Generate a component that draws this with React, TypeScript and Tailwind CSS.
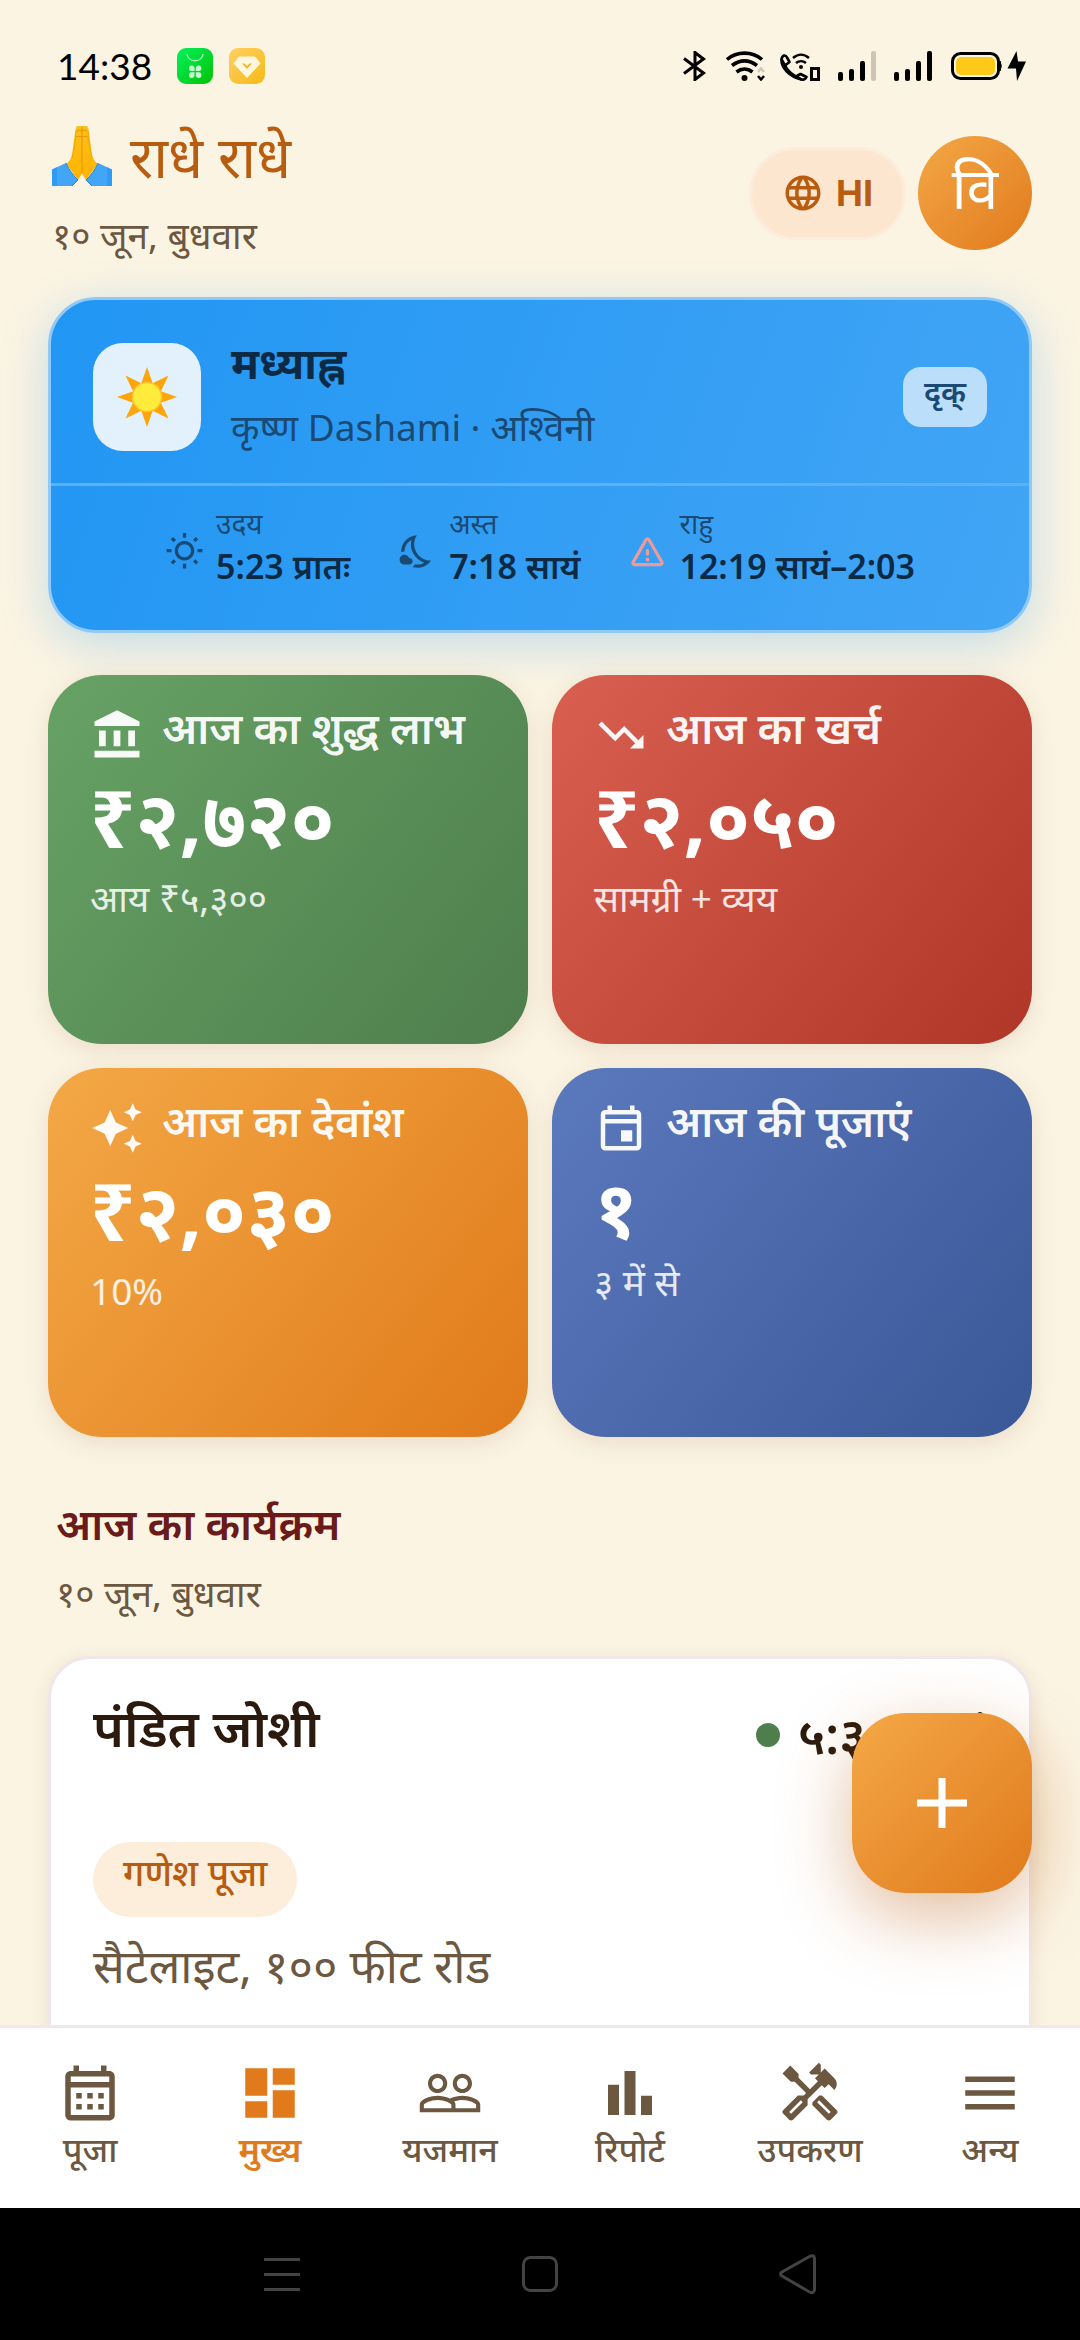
import type { ReactNode } from "react";
import {
  MdBarChart,
  MdDashboard,
  MdLanguage,
  MdMenu,
  MdOutlineCalendarMonth,
  MdOutlineHandyman,
  MdOutlineNightsStay,
  MdOutlineWbSunny,
  MdPeopleOutline,
} from "react-icons/md";

const stats = [
  {
    title: "आज का शुद्ध लाभ",
    value: "₹२,७२०",
    note: "आय ₹५,३००",
    bg: "from-[#67a265] to-[#4e7e4c]",
    leading: "leading-[96px]",
    icon: "M4 10h3v7H4zM10.5 10h3v7h-3zM2 19h20v3H2zM17 10h3v7h-3zM12 1 2 6v2h20V6z",
  },
  {
    title: "आज का खर्च",
    value: "₹२,०५०",
    note: "सामग्री + व्यय",
    bg: "from-[#d95f50] to-[#b03728]",
    leading: "leading-[96px]",
    icon: "m16 18 2.29-2.29-4.88-4.88-4 4L2 7.41 3.41 6l6 6 4-4 6.3 6.29L22 12v6z",
  },
  {
    title: "आज का देवांश",
    value: "₹२,०३०",
    note: "10%",
    bg: "from-[#f4a846] to-[#e07a1a]",
    leading: "leading-[96px]",
    icon: "m19 9 1.25-2.75L23 5l-2.75-1.25L19 1l-1.25 2.75L15 5l2.75 1.25zM11.5 9.5 9 4 6.5 9.5 1 12l5.5 2.5L9 20l2.5-5.5L17 12zM19 15l-1.25 2.75L15 19l2.75 1.25L19 23l1.25-2.75L23 19l-2.75-1.25z",
  },
  {
    title: "आज की पूजाएं",
    value: "१",
    note: "३ में से",
    bg: "from-[#5b79bd] to-[#3a5797]",
    leading: "leading-[87px]",
    icon: "M19 4h-1V2h-2v2H8V2H6v2H5c-1.11 0-1.99.9-1.99 2L3 20a2 2 0 0 0 2 2h14c1.1 0 2-.9 2-2V6c0-1.1-.9-2-2-2zm0 16H5V10h14v10zm0-12H5V6h14v2zm-7 5h5v5h-5z",
  },
];

const tabs = [
  { label: "पूजा", Icon: MdOutlineCalendarMonth, active: false },
  { label: "मुख्य", Icon: MdDashboard, active: true },
  { label: "यजमान", Icon: MdPeopleOutline, active: false },
  { label: "रिपोर्ट", Icon: MdBarChart, active: false },
  { label: "उपकरण", Icon: MdOutlineHandyman, active: false },
  { label: "अन्य", Icon: MdMenu, active: false },
];

function StatusBar() {
  return (
    <div className="flex h-[120px] shrink-0 items-center justify-between pt-3 pr-[54px] pl-[57px]">
      <div className="flex items-center">
        <span className="w-[120px] font-['Lato',sans-serif] text-[37px] leading-[42px] text-black">
          14:38
        </span>
        <svg className="h-9 w-9" viewBox="0 0 36 36">
          <defs>
            <linearGradient id="gift" x1="0" y1="0" x2="1" y2="1">
              <stop offset="0" stopColor="#00f25c" />
              <stop offset="1" stopColor="#05c205" />
            </linearGradient>
          </defs>
          <rect width="36" height="36" rx="9" fill="url(#gift)" />
          <path d="M10 6c1 9 15 9 16 0" fill="none" stroke="#b9fbc4" strokeWidth="1.4" />
          <g fill="#c4fbcf">
            <path d="M17.500 23h-3a2.800 2.800 0 1 1 3-3zM18.800 23h3a2.800 2.800 0 1 0-3-3z" />
            <path d="M17.500 24.300h-3a2.800 2.800 0 1 0 3 3zM18.800 24.300h3a2.800 2.800 0 1 1-3 3z" />
          </g>
        </svg>
        <svg className="ml-4 h-9 w-9" viewBox="0 0 36 36">
          <defs>
            <linearGradient id="gem" x1="0" y1="0" x2="1" y2="1">
              <stop offset="0" stopColor="#ffcf63" />
              <stop offset="1" stopColor="#f5bb17" />
            </linearGradient>
          </defs>
          <rect width="36" height="36" rx="9" fill="url(#gem)" />
          <path
            d="M10 9h16l5 6.500-13 14L5 15.500z"
            fill="#fff6df"
            stroke="#fff6df"
            strokeWidth="1"
            strokeLinejoin="round"
          />
          <path d="M13 15.500h2.500l2.500 2.500 2.500-2.500H23L18 21z" fill="#f3b62a" />
        </svg>
      </div>

      <svg className="h-[30px] w-[343px]" viewBox="0 0 343 30" fill="none" stroke="#000">
        {/* Bluetooth */}
        <path d="M1 7.500 20.500 22 12 28.500v-27L20.500 8 1 22.500" strokeWidth="3" />
        {/* Wi-Fi */}
        <path d="M44 8.500c10-8.500 25-8.500 35 0" strokeWidth="3.600" />
        <path d="M49 14.500c8-6 17-6 25 0" strokeWidth="3.600" />
        <path d="M53.500 21c5-4 11-4 16 0" strokeWidth="3.600" />
        <circle cx="61.500" cy="27" r="3" fill="#000" stroke="none" />
        <path d="m75 21 3-3.500 3 3.500" stroke="#cfc7bb" strokeWidth="2.500" />
        <path d="m75 25 3 3.500 3-3.500" strokeWidth="2.500" />
        {/* Wi-Fi call */}
        <path
          d="M98.500 8c1-4 4-4.500 5.500-1.500l2.500 4.500-4.500 3.500z"
          strokeWidth="2.600"
          strokeLinejoin="round"
        />
        <path d="M98.500 8c-.5 9 8 18 20 20.500" strokeWidth="2.600" />
        <path
          d="M113 25.500l4.500-2.500 6 3c-1 2-3 3-5 2.500z"
          strokeWidth="2.600"
          strokeLinejoin="round"
        />
        <path d="M102 14.500c2 4 6 8 11 11" strokeWidth="2.600" />
        <path d="M110 7c5-4.500 11-4.500 16 0M113 12c3-2.500 7-2.500 10 0" strokeWidth="2.400" />
        <circle cx="118" cy="16" r="2" fill="#000" stroke="none" />
        <path d="M128.500 17.500h7v11h-7z" strokeWidth="3" />
        {/* Signal */}
        <g fill="#000" stroke="none">
          <rect x="155" y="21" width="5" height="9" rx="2" />
          <rect x="166" y="18" width="5" height="12" rx="2" />
          <rect x="177" y="10" width="5" height="20" rx="2" />
          <rect x="188" y="0" width="5" height="30" rx="2" fill="#cdc5b9" />
          <rect x="211" y="21" width="5" height="9" rx="2" />
          <rect x="222" y="18" width="5" height="12" rx="2" />
          <rect x="233" y="10" width="5" height="20" rx="2" />
          <rect x="244" y="0" width="5" height="30" rx="2" />
        </g>
        {/* Battery */}
        <rect x="269.500" y="2.500" width="46" height="25" rx="8" strokeWidth="3" />
        <rect x="273" y="6" width="39" height="18" rx="5" fill="#ffc917" stroke="none" />
        <path d="M317 10q2.500 5 0 10z" fill="#000" strokeWidth="1" />
        <path d="m333.500 0-9 17.500h8.500L334 30l9-19.500h-8z" fill="#000" stroke="none" />
      </svg>
    </div>
  );
}

function FoldedHands() {
  return (
    <svg className="size-[60px]" viewBox="0 0 60 60" aria-hidden="true">
      <defs>
        <linearGradient id="skin" x1="0" y1="0" x2="0" y2="1">
          <stop offset="0" stopColor="#fcc01b" />
          <stop offset="1" stopColor="#ffb300" />
        </linearGradient>
      </defs>
      <path
        d="M26 0h8c1.500 0 2 1 2.500 3l3 22c.5 6 2 9 6 13L34 54l-4-6.500L26 54 14.500 38c4-4 5.500-7 6-13l3-22C24 1 24.500 0 26 0z"
        fill="url(#skin)"
      />
      <path
        d="M30 1v46M24.500 5q2.500-2 5 0 3-2 5.500 0M24.200 11q2.500-1.500 5.300 0 3-1.500 6 0"
        fill="none"
        stroke="#e59600"
        strokeWidth="1"
      />
      <path d="M24 5q-1 17-4 27M36 5q1 17 4 27" fill="none" stroke="#f2a600" strokeWidth="1" />
      <path d="M0 43.500 14 37c3 7 7 12 12 17l-6 6H0z" fill="#42a5f5" />
      <path d="M60 43.500 46 37c-3 7-7 12-12 17l6 6h20z" fill="#42a5f5" />
      <path
        d="M14 37c3 7 7 12 12 17l-6 6M46 37c-3 7-7 12-12 17l6 6"
        fill="none"
        stroke="#2f7fcf"
        strokeWidth="1"
      />
      <path d="M0 43.500 5 41v19H0zM60 43.500 55 41v19h5z" fill="#2196f3" opacity=".6" />
    </svg>
  );
}

function SunStar() {
  return (
    <svg className="size-[60px]" viewBox="-30 -30 60 60" aria-hidden="true">
      <path
        d="m0-30 5.700 16.200L21.500-21.500 13.900-5.700 30 0 13.900 5.700l7.600 15.800-15.800-7.700L0 30l-5.700-16.200-15.800 7.700 7.600-15.800L-30 0l16.100-5.700-7.600-15.800 15.800 7.700z"
        fill="#ffa40a"
      />
      <circle r="14.500" fill="#ffeb3b" stroke="#fbc52f" strokeWidth="1.5" />
    </svg>
  );
}

function Header() {
  return (
    <header className="flex shrink-0 items-center justify-between px-12 pb-[35px]">
      <div className="pl-1">
        <h1 className="flex items-center gap-[18px] text-[57px] leading-[72px] text-[#b85c0f]">
          <FoldedHands />
          राधे राधे
        </h1>
        <p className="mt-4 text-[37px] leading-[54px] text-[#6c5840]">१० जून, बुधवार</p>
      </div>
      <div className="flex items-center gap-3 pt-1">
        <button
          type="button"
          className="flex h-[93px] items-center gap-3 rounded-full border-3 border-[#fcecdb] bg-[#fce6cf] px-[30px] font-['Inter',sans-serif] text-[36px] font-bold text-[#b85c0f]"
        >
          <MdLanguage className="size-[42px]" />
          HI
        </button>
        <button
          type="button"
          className="size-[114px] rounded-full bg-linear-to-br from-[#f4a846] to-[#e07a1a] pb-3 text-[57px] leading-[72px] text-white"
        >
          वि
        </button>
      </div>
    </header>
  );
}

function Timing({ icon, label, value }: { icon: ReactNode; label: string; value: string }) {
  return (
    <div className="flex items-center gap-3 text-[#1a4a73]">
      {icon}
      <div className="pb-2">
        <p className="text-[28px] leading-[38px]">{label}</p>
        <p className="text-[34px] leading-[48px] font-semibold text-[#0d2a45]">{value}</p>
      </div>
    </div>
  );
}

function PanchangCard() {
  return (
    <section className="rounded-[48px] border-3 border-[#90c9f8] bg-linear-[109deg] from-[#2196f3] to-[#42a5f5] bg-origin-border shadow-[0_12px_48px_rgba(33,150,243,0.25)]">
      <div className="flex items-center border-b-3 border-[#5cb0f7] px-[42px] pt-[27px] pb-4">
        <div className="flex size-[108px] items-center justify-center rounded-[30px] bg-[#e3f1fd]">
          <SunStar />
        </div>
        <div className="ml-[30px] flex-1 pb-3">
          <h2 className="text-[43px] leading-[72px] font-bold text-[#0d2a45]">मध्याह्न</h2>
          <p className="text-[37px] leading-[56px] text-[#1a4a73]">
            कृष्ण Dashami · <span lang="sa">अश्विनी</span>
          </p>
        </div>
        <span className="rounded-[18px] bg-[#bbdefb] px-[21px] pb-3 text-[31px] leading-[48px] font-semibold text-[#1a4a73]">
          दृक्
        </span>
      </div>
      <div className="flex justify-center gap-12 pt-[18px] pb-[32px]">
        <Timing icon={<MdOutlineWbSunny className="size-[39px]" />} label="उदय" value="5:23 प्रातः" />
        <Timing icon={<MdOutlineNightsStay className="size-[39px]" />} label="अस्त" value="7:18 सायं" />
        <Timing
          icon={
            <svg
              className="size-[39px]"
              viewBox="0 0 24 24"
              fill="none"
              stroke="#ef9a9a"
              strokeWidth="2"
              strokeLinecap="round"
              strokeLinejoin="round"
            >
              <path d="M11.100 4.800a1 1 0 0 1 1.800 0l7.900 13.700a1 1 0 0 1-.9 1.500H4.100a1 1 0 0 1-.9-1.500zM12 11.500v2" />
              <path d="M11 16h2v2h-2z" fill="#ef9a9a" stroke="none" />
            </svg>
          }
          label="राहु"
          value="12:19 सायं–2:03"
        />
      </div>
    </section>
  );
}

function StatGrid() {
  return (
    <section className="mt-[42px] grid grid-cols-2 gap-6">
      {stats.map((stat) => (
        <article
          key={stat.title}
          className={`aspect-[1.3] rounded-[54px] bg-linear-[128deg] px-[42px] pt-[25px] text-white shadow-[0_6px_24px_rgba(120,60,20,0.12)] ${stat.bg}`}
        >
          <div className="flex items-center gap-[18px]">
            <svg className="size-[54px] fill-white/95" viewBox="0 0 24 24">
              <path d={stat.icon} />
            </svg>
            <h3 className="pb-[15px] text-[43px] leading-[55px] font-semibold whitespace-nowrap text-white/95">
              {stat.title}
            </h3>
          </div>
          <p className={`text-[79px] font-bold ${stat.leading}`}>{stat.value}</p>
          <p className="mt-[5px] text-[37px] leading-[54px] text-white/85">{stat.note}</p>
        </article>
      ))}
    </section>
  );
}

function Schedule() {
  return (
    <section className="mt-[57px]">
      <div className="pl-2">
        <h2 className="text-[43px] leading-[60px] font-semibold text-[#6b1a1a]">आज का कार्यक्रम</h2>
        <p className="mt-3 text-[37px] leading-[54px] text-[#6c5840]">१० जून, बुधवार</p>
      </div>
      <article className="mt-9 rounded-[42px] border-3 border-[#efe7ea] bg-white px-[42px] pt-[35px] pb-24 shadow-[0_3px_18px_rgba(120,60,20,0.1)]">
        <div className="flex items-start justify-between">
          <h3 className="text-[52px] leading-[66px] font-semibold text-[#2b1a0d]">पंडित जोशी</h3>
          <p className="flex items-center gap-[18px] pt-2 text-[50px] leading-[66px] font-semibold text-[#2b1a0d]">
            <span className="size-6 rounded-full bg-[#4e7e4c]" />
            ५:३० सायं
          </p>
        </div>
        <p className="mt-[74px] w-fit rounded-full bg-[#fdeedb] px-[30px] pb-[15px] text-[37px] leading-[60px] font-medium text-[#b85c0f]">
          गणेश पूजा
        </p>
        <p className="mt-[18px] text-[47px] leading-[60px] text-[#6c5840]">सैटेलाइट, १०० फीट रोड</p>
      </article>
    </section>
  );
}

function BottomNav() {
  return (
    <nav className="relative grid grid-cols-6 border-t-3 border-[#eee8ea] bg-white pt-8 pb-[39px]">
      {tabs.map(({ label, Icon, active }) => (
        <a
          key={label}
          href="#"
          className={`flex flex-col items-center gap-[3px] text-[34px] leading-[40px] ${
            active ? "font-semibold text-[#e07a1a]" : "font-medium text-[#6c5840]"
          }`}
        >
          <Icon className="size-[66px]" />
          {label}
        </a>
      ))}
    </nav>
  );
}

function SystemNav() {
  return (
    <div className="flex h-[132px] shrink-0 items-center justify-center gap-[218px] bg-black">
      <button type="button" aria-label="Recent apps">
        <svg className="size-10" viewBox="0 0 40 40" stroke="#434343" strokeWidth="3">
          <path d="M2 5.500h36M2 20.500h36M2 35.500h36" />
        </svg>
      </button>
      <button type="button" aria-label="Home">
        <svg className="size-10" viewBox="0 0 40 40" fill="none" stroke="#434343" strokeWidth="3">
          <rect x="3.500" y="3.500" width="33" height="33" rx="7" />
        </svg>
      </button>
      <button type="button" aria-label="Back">
        <svg className="size-10" viewBox="0 0 40 40" fill="none" stroke="#434343" strokeWidth="3">
          <path d="M31.500 2.500 4 18q-3 2 0 4l27.500 16q4.500 2 5-2.500v-31q-.500-4-5-2z" />
        </svg>
      </button>
    </div>
  );
}

export default function App() {
  return (
    <div
      lang="hi"
      className="flex h-screen flex-col bg-[#fbf4e3] font-['Noto_Sans','Noto_Sans_Devanagari',sans-serif]"
    >
      <div className="relative flex min-h-0 flex-1 flex-col overflow-hidden">
        <StatusBar />
        <Header />
        <main className="shrink-0 px-12">
          <PanchangCard />
          <StatGrid />
          <Schedule />
        </main>
        <button
          type="button"
          aria-label="Add"
          className="absolute right-12 bottom-[132px] flex size-[180px] items-center justify-center rounded-[54px] bg-linear-to-br from-[#f4a846] to-[#e07a1a] shadow-[0_24px_72px_rgba(184,92,15,0.4)]"
        >
          <svg className="size-[50px]" viewBox="0 0 50 50" stroke="#fff" strokeWidth="7">
            <path d="M25 0v50M0 25h50" />
          </svg>
        </button>
      </div>
      <BottomNav />
      <SystemNav />
    </div>
  );
}
